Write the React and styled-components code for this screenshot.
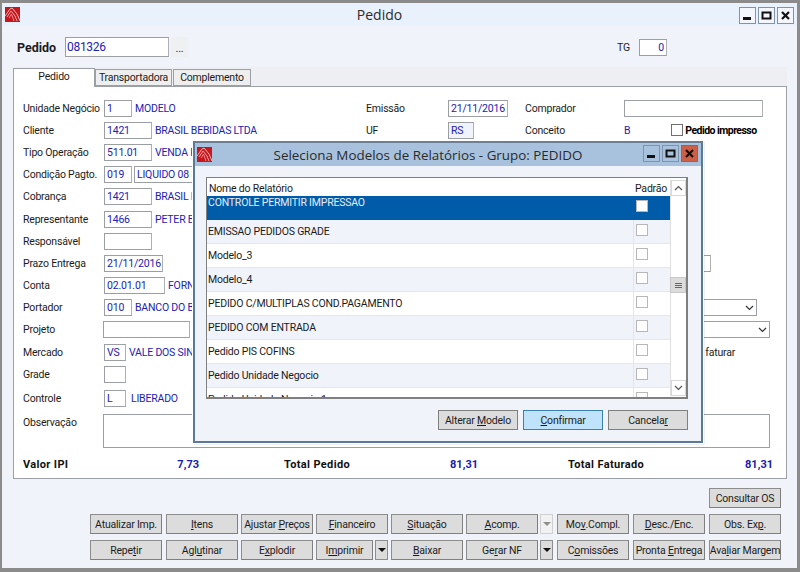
import React from "react";
import styled, { createGlobalStyle } from "styled-components";

const Global = createGlobalStyle`
  html, body { margin: 0; padding: 0; background: #fff; }
  body { font-family: Roboto, "Liberation Sans", Arial, sans-serif; font-size: 10.5px; letter-spacing: -0.2px; color: #1c1c1c; }
  * { box-sizing: border-box; }
  u { text-underline-offset: 1px; }
`;

const Desktop = styled.div`
  position: relative;
  width: 800px;
  height: 572px;
  overflow: hidden;
  display: flex;
  flex-direction: column;
  background: #f1f3fa;
  border: solid #8b8b8b;
  border-width: 3px 3px 4px 2px;
`;

const TitleBar = styled.div`
  position: relative;
  flex: none;
  height: 23px;
  padding-right: 40px;
  display: flex;
  align-items: center;
  justify-content: center;
  background: ${(p) => (p.$modal ? "#a8c2dd" : "#e9f1fd")};
  font-family: "Open Sans", sans-serif;
  font-size: ${(p) => (p.$modal ? 13.4 : 14)}px;
  letter-spacing: 0;
  color: #2b2b2b;
`;

const TitleIcon = styled.svg`
  position: absolute;
  left: ${(p) => p.$left}px;
  top: 4px;
`;

const WinButtons = styled.div`
  position: absolute;
  right: ${(p) => p.$right}px;
  top: ${(p) => p.$top}px;
  display: flex;
  gap: 2px;
`;

const WinButton = styled.div`
  width: 17px;
  height: 17px;
  display: flex;
  align-items: center;
  justify-content: center;
  border: 1px solid ${(p) => (p.$close ? "#b9573f" : "#7e94ad")};
  background: ${(p) => (p.$close ? "#cc5f48" : p.$modal ? "#a8c2dd" : "#f3f7fd")};
`;

const Content = styled.div`
  flex: 1;
  padding: 11px 10px 0 11px;
  display: flex;
  flex-direction: column;
`;

const HeaderRow = styled.div`
  display: flex;
  align-items: center;
  height: 20px;
  padding-left: 4px;
`;

const OrderLabel = styled.span`
  width: 48px;
  font-size: 12.5px;
  font-weight: 700;
  letter-spacing: 0;
`;

const Field = styled.div`
  flex: none;
  width: ${(p) => p.$w}px;
  height: ${(p) => p.$h || 17}px;
  margin-left: ${(p) => p.$ml || 0}px;
  padding: 0 2px;
  display: flex;
  align-items: center;
  justify-content: ${(p) => (p.$right ? "flex-end" : "flex-start")};
  background: ${(p) => (p.$ro ? "#f1f3fa" : "#fff")};
  border: 1px solid #9b9ea3;
  border-right-color: #aeb0b3;
  color: #2222b4;
  white-space: nowrap;
  overflow: hidden;
`;

const BigField = styled(Field)`
  font-size: 12px;
  letter-spacing: -0.3px;
  padding-left: 1px;
`;

const DotsButton = styled.div`
  width: 17px;
  height: 20px;
  margin-left: 2px;
  display: flex;
  align-items: flex-end;
  justify-content: center;
  padding-bottom: 3px;
  background: #eff0f2;
  font-size: 11px;
  line-height: 11px;
`;

const TgLabel = styled.span`
  margin-left: 429px;
  width: 22px;
`;

const TabStrip = styled.div`
  display: flex;
  align-items: flex-end;
  height: 19px;
  margin-top: 10px;
  background: #eeeff2;
`;

const Tab = styled.div`
  height: ${(p) => (p.$active ? 19 : 17)}px;
  width: ${(p) => p.$w}px;
  margin-right: ${(p) => p.$mr || 0}px;
  display: flex;
  align-items: center;
  justify-content: center;
  position: relative;
  top: ${(p) => (p.$active ? 1 : 0)}px;
  padding-bottom: ${(p) => (p.$active ? 4 : 0)}px;
  z-index: ${(p) => (p.$active ? 1 : 0)};
  background: ${(p) => (p.$active ? "#fff" : "#eeeeee")};
  border: 1px solid #9ba0a6;
  border-bottom: ${(p) => (p.$active ? "none" : "1px solid #9ba0a6")};
`;

const Panel = styled.div`
  height: 393px;
  background: #fff;
  border: 1px solid #9ba0a6;
  padding: 10px 9px 0;
  position: relative;
`;

const Row = styled.div`
  display: grid;
  grid-template-columns: 343px 82px 77px 99px 1fr;
  align-items: center;
  height: 22.2px;
  margin-top: ${(p) => p.$mt || 0}px;
`;

const Left = styled.div`
  display: flex;
  align-items: center;
  height: 17px;
  white-space: nowrap;
`;

const Label = styled.span`
  flex: none;
  width: 81px;
`;

const Value = styled.span`
  color: #2222b4;
  margin-left: ${(p) => p.$ml ?? 3}px;
  white-space: nowrap;
`;

const Wide = styled.div`
  grid-column: 2 / -1;
  display: flex;
  justify-content: flex-end;
  padding-right: ${(p) => p.$pr || 0}px;
  height: 17px;
  align-items: center;
`;

const SelectBox = styled.div`
  width: 120px;
  height: 17px;
  background: #fff;
  border: 1px solid #9b9ea3;
  display: flex;
  align-items: center;
  justify-content: flex-end;
  padding-right: 2px;
`;

const CheckLine = styled.div`
  display: flex;
  align-items: center;
  gap: 2px;
  margin-left: 41px;
  font-weight: 700;
  font-size: 10.5px;
  letter-spacing: -0.55px;
  color: #000;
`;

const Check = styled.span`
  flex: none;
  display: block;
  width: 12px;
  height: 12px;
  background: #fff;
  border: 1px solid ${(p) => (p.$dark ? "#707070" : "#b8b8b8")};
`;

const ObsRow = styled.div`
  display: flex;
  height: 34px;
  margin-top: 4px;
`;

const ObsLabel = styled.span`
  width: 81px;
  padding-top: 2px;
`;

const ObsBox = styled.div`
  width: 667px;
  margin-left: -1px;
  background: #fff;
  border: 1px solid #9b9ea3;
`;

const Totals = styled.div`
  display: flex;
  margin-top: 10px;
  font-weight: 700;
  font-size: 11px;
  white-space: nowrap;
`;

const TotalGroup = styled.div`
  display: flex;
  justify-content: space-between;
  width: ${(p) => p.$w}px;
  margin-left: ${(p) => p.$ml || 0}px;
`;

const TotalLabel = styled.span`
  color: #111;
  letter-spacing: 0.35px;
`;

const TotalValue = styled.span`
  color: #1a1ab0;
  letter-spacing: 0;
`;

const Actions = styled.div`
  display: flex;
  flex-direction: column;
  gap: 6px;
  margin-top: 9px;
`;

const ConsultRow = styled.div`
  display: flex;
  justify-content: flex-end;
  padding-right: 6px;
`;

const ButtonGrid = styled.div`
  display: grid;
  grid-template-columns: 76px 75px 75px 75px 75px 74px 17px 76px 76px 72px;
  margin-left: 77px;
`;

const Btn = styled.div`
  height: 20px;
  width: ${(p) => p.$w || 72}px;
  display: flex;
  align-items: center;
  justify-content: center;
  background: #dcdcdc;
  border: 1px solid #8d8d8d;
  border-right-color: #7f7f7f;
  border-bottom-color: #7f7f7f;
  white-space: pre;
`;

const Split = styled.div`
  display: flex;
  gap: 2px;
`;

const Arrow = styled.div`
  width: 13px;
  height: 20px;
  display: flex;
  align-items: center;
  justify-content: center;
  background: ${(p) => (p.$off ? "#f1f1f1" : "#dcdcdc")};
  border: 1px solid ${(p) => (p.$off ? "#d0d0d0" : "#8d8d8d")};

  &::after {
    content: "";
    border: 4px solid transparent;
    border-top-color: ${(p) => (p.$off ? "#8f8f8f" : "#111")};
    border-bottom-width: 0;
  }
`;

const Modal = styled.div`
  position: absolute;
  left: 191px;
  top: 138px;
  width: 510px;
  height: 302px;
  display: flex;
  flex-direction: column;
  background: #f1f3fa;
  border: 2px solid #5b7a98;
  border-top-color: #6d7f92;
  outline: 1px solid #fff;
  box-shadow: 1px 1px 1px rgba(0, 0, 0, 0.35);
`;

const ModalBody = styled.div`
  flex: 1;
  padding: 11px 13px 0 11px;
`;

const ListBox = styled.div`
  position: relative;
  height: 222px;
  background: #fff;
  border: 1px solid #7f7f7f;
  border-width: 1px 2px 2px 1px;
  overflow: hidden;
  padding: 2px 0 0;
`;

const ListHead = styled.div`
  display: grid;
  grid-template-columns: 1fr 37px 16px;
  height: 16px;
  align-items: center;
  background: #fff;
`;

const HeadCell = styled.span`
  padding-left: 2px;
`;

const ListRow = styled.div`
  display: grid;
  grid-template-columns: 1fr 37px;
  height: 24px;
  margin-right: 16px;
  align-items: center;
  background: ${(p) => (p.$sel ? "#005ca8" : p.$alt ? "#f1f3fa" : "#fff")};
  color: ${(p) => (p.$sel ? "#e4eefa" : "#1c1c1c")};
  border-bottom: 1px solid ${(p) => (p.$sel ? "#005ca8" : "#e6e6ea")};
`;

const RowName = styled.span`
  padding: 0 0 1px 1px;
  align-self: ${(p) => (p.$sel ? "start" : "center")};
  white-space: nowrap;
  overflow: hidden;
`;

const CheckCell = styled.span`
  height: 100%;
  display: flex;
  align-items: center;
  padding: 0 0 3px 2px;
  border-left: 1px solid ${(p) => (p.$sel ? "#005ca8" : "#e6e6ea")};
`;

const ScrollBar = styled.div`
  position: absolute;
  right: 0;
  top: 2px;
  bottom: 1px;
  width: 16px;
  background: #fff;
  border-left: 1px solid #e0e0e0;
  display: flex;
  flex-direction: column;
  justify-content: space-between;
`;

const ScrollBtn = styled.div`
  height: 16px;
  display: flex;
  align-items: center;
  justify-content: center;
  border: 1px solid #d8d8d8;
  background: #fff;
`;

const Thumb = styled.div`
  position: absolute;
  left: -1px;
  right: 0;
  top: 97px;
  height: 16px;
  display: flex;
  flex-direction: column;
  gap: 1px;
  align-items: center;
  justify-content: center;
  background: #dcdcdc;
  border: 1px solid #c8c8c8;

  i {
    display: block;
    width: 7px;
    height: 1px;
    background: #666;
  }
`;

const ModalActions = styled.div`
  display: flex;
  justify-content: flex-end;
  gap: 5px;
  margin-top: 11px;
`;

const ModalBtn = styled.div`
  width: ${(p) => p.$w}px;
  height: 20px;
  display: flex;
  align-items: center;
  justify-content: center;
  white-space: pre;
  background: ${(p) => (p.$primary ? "#bee3fb" : "#dcdcdc")};
  border: 1px solid ${(p) => (p.$primary ? "#3c7fb1" : "#7f7f7f")};
`;

const Logo = ({ left }) => (
  <TitleIcon $left={left} width="15" height="15" viewBox="0 0 15 15">
    <rect width="15" height="15" fill="#c8161d" />
    <path d="M0 9 L5 2 L7 1 L12 7 L15 14" fill="none" stroke="#f2b6b6" strokeWidth="1" />
    <path d="M2 10 L6 4 L10 9 L12 14" fill="none" stroke="#f0a5a5" strokeWidth="1" />
    <path d="M4 11 L6.5 7 L9 14" fill="none" stroke="#e98c8c" strokeWidth="1" />
  </TitleIcon>
);

const MinIcon = ({ c = "#111" }) => (
  <svg width="11" height="11" viewBox="0 0 11 11">
    <rect x="1" y="7" width="8" height="3" fill={c} />
  </svg>
);

const MaxIcon = ({ c = "#111" }) => (
  <svg width="11" height="11" viewBox="0 0 11 11">
    <rect x="1.5" y="2.5" width="8" height="6" fill="none" stroke={c} strokeWidth="2" />
  </svg>
);

const CloseIcon = ({ c = "#111" }) => (
  <svg width="11" height="11" viewBox="0 0 11 11">
    <path d="M2 2 L9 9 M9 2 L2 9" stroke={c} strokeWidth="2.2" />
  </svg>
);

const Chevron = ({ up, c = "#555" }) => (
  <svg width="9" height="6" viewBox="0 0 9 6">
    <path d={up ? "M1 5 L4.5 1.5 L8 5" : "M1 1 L4.5 4.5 L8 1"} fill="none" stroke={c} strokeWidth="1.2" />
  </svg>
);

const REPORTS = [
  "CONTROLE PERMITIR IMPRESSAO",
  "EMISSAO PEDIDOS GRADE",
  "Modelo_3",
  "Modelo_4",
  "PEDIDO C/MULTIPLAS COND.PAGAMENTO",
  "PEDIDO COM ENTRADA",
  "Pedido PIS COFINS",
  "Pedido Unidade Negocio",
  "Pedido Unidade Negocio 1",
];

export default function App() {
  return (
    <Desktop>
      <Global />
      <TitleBar>
        <Logo left={3} />
        Pedido
        <WinButtons $right={3} $top={4}>
          <WinButton><MinIcon /></WinButton>
          <WinButton><MaxIcon /></WinButton>
          <WinButton><CloseIcon /></WinButton>
        </WinButtons>
      </TitleBar>

      <Content>
        <HeaderRow>
          <OrderLabel>Pedido</OrderLabel>
          <BigField $w={104} $h={20}>081326</BigField>
          <DotsButton>...</DotsButton>
          <TgLabel>TG</TgLabel>
          <Field $w={28} $right>0</Field>
        </HeaderRow>

        <TabStrip>
          <Tab $active $w={82}>Pedido</Tab>
          <Tab $w={77} $mr={1}>Transportadora</Tab>
          <Tab $w={78}>Complemento</Tab>
        </TabStrip>

        <Panel>
          <Row>
            <Left><Label>Unidade Negócio</Label><Field $w={28}>1</Field><Value>MODELO</Value></Left>
            <span>Emissão</span>
            <Field $w={60}>21/11/2016</Field>
            <span>Comprador</span>
            <Field $w={139} />
          </Row>
          <Row>
            <Left><Label>Cliente</Label><Field $w={48}>1421</Field><Value>BRASIL BEBIDAS LTDA</Value></Left>
            <span>UF</span>
            <Field $w={26} $ro>RS</Field>
            <span>Conceito</span>
            <Left>
              <Value $ml={0}>B</Value>
              <CheckLine><Check $dark />Pedido impresso</CheckLine>
            </Left>
          </Row>
          <Row>
            <Left><Label>Tipo Operação</Label><Field $w={48}>511.01</Field><Value>VENDA PADRAO</Value></Left>
          </Row>
          <Row>
            <Left><Label>Condição Pagto.</Label><Field $w={28}>019</Field><Field $w={80} $ml={2}>LIQUIDO 08 DIAS</Field></Left>
          </Row>
          <Row>
            <Left><Label>Cobrança</Label><Field $w={48}>1421</Field><Value>BRASIL BEBIDAS</Value></Left>
          </Row>
          <Row>
            <Left><Label>Representante</Label><Field $w={48}>1466</Field><Value>PETER BAUER</Value></Left>
          </Row>
          <Row>
            <Left><Label>Responsável</Label><Field $w={48} /></Left>
          </Row>
          <Row>
            <Left><Label>Prazo Entrega</Label><Field $w={59}>21/11/2016</Field></Left>
            <Wide $pr={66}><Field $w={60} /></Wide>
          </Row>
          <Row>
            <Left><Label>Conta</Label><Field $w={61}>02.01.01</Field><Value>FORNECEDOR</Value></Left>
          </Row>
          <Row>
            <Left><Label>Portador</Label><Field $w={28}>010</Field><Value>BANCO DO BRASIL</Value></Left>
            <Wide $pr={20}><SelectBox><Chevron c="#333" /></SelectBox></Wide>
          </Row>
          <Row>
            <Left><Label>Projeto</Label><Field $w={87} $ml={-1} /></Left>
            <Wide $pr={7}><SelectBox><Chevron c="#333" /></SelectBox></Wide>
          </Row>
          <Row>
            <Left><Label>Mercado</Label><Field $w={22}>VS</Field><Value>VALE DOS SINOS</Value></Left>
            <Wide $pr={42}><span>faturar</span></Wide>
          </Row>
          <Row>
            <Left><Label>Grade</Label><Field $w={22} /></Left>
          </Row>
          <Row $mt={2}>
            <Left><Label>Controle</Label><Field $w={22}>L</Field><Value $ml={5}>LIBERADO</Value></Left>
          </Row>
          <ObsRow>
            <ObsLabel>Observação</ObsLabel>
            <ObsBox />
          </ObsRow>
          <Totals>
            <TotalGroup $w={176}>
              <TotalLabel>Valor IPI</TotalLabel>
              <TotalValue>7,73</TotalValue>
            </TotalGroup>
            <TotalGroup $w={194} $ml={85}>
              <TotalLabel>Total Pedido</TotalLabel>
              <TotalValue>81,31</TotalValue>
            </TotalGroup>
            <TotalGroup $w={205} $ml={90}>
              <TotalLabel>Total Faturado</TotalLabel>
              <TotalValue>81,31</TotalValue>
            </TotalGroup>
          </Totals>
        </Panel>

        <Actions>
          <ConsultRow><Btn>Consultar OS</Btn></ConsultRow>
          <ButtonGrid>
            <Btn>Atualizar Imp.</Btn>
            <Btn><u>I</u>tens</Btn>
            <Btn>Ajustar <u>P</u>reços</Btn>
            <Btn><u>F</u>inanceiro</Btn>
            <Btn><u>S</u>ituação</Btn>
            <Btn><u>A</u>comp.</Btn>
            <Arrow $off />
            <Btn>Mo<u>v</u>.Compl.</Btn>
            <Btn><u>D</u>esc./Enc.</Btn>
            <Btn>Obs. Ex<u>p</u>.</Btn>
          </ButtonGrid>
          <ButtonGrid>
            <Btn>Repe<u>t</u>ir</Btn>
            <Btn>Agl<u>u</u>tinar</Btn>
            <Btn>E<u>x</u>plodir</Btn>
            <Split><Btn $w={57}>I<u>m</u>primir</Btn><Arrow /></Split>
            <Btn><u>B</u>aixar</Btn>
            <Btn>Ge<u>r</u>ar NF</Btn>
            <Arrow />
            <Btn>C<u>o</u>missões</Btn>
            <Btn>Pronta <u>E</u>ntrega</Btn>
            <Btn>Ava<u>l</u>iar Margem</Btn>
          </ButtonGrid>
        </Actions>
      </Content>

      <Modal>
        <TitleBar $modal>
          <Logo left={2} />
          Seleciona Modelos de Relatórios - Grupo: PEDIDO
          <WinButtons $right={3} $top={2}>
            <WinButton $modal><MinIcon /></WinButton>
            <WinButton $modal><MaxIcon /></WinButton>
            <WinButton $close><CloseIcon /></WinButton>
          </WinButtons>
        </TitleBar>
        <ModalBody>
          <ListBox>
            <ListHead>
              <HeadCell>Nome do Relatório</HeadCell>
              <HeadCell>Padrão</HeadCell>
            </ListHead>
            {REPORTS.map((name, i) => (
              <ListRow key={name} $sel={i === 0} $alt={i % 2 === 1}>
                <RowName $sel={i === 0}>{name}</RowName>
                <CheckCell $sel={i === 0}><Check /></CheckCell>
              </ListRow>
            ))}
            <ScrollBar>
              <ScrollBtn><Chevron up /></ScrollBtn>
              <Thumb><i /><i /><i /></Thumb>
              <ScrollBtn><Chevron /></ScrollBtn>
            </ScrollBar>
          </ListBox>
          <ModalActions>
            <ModalBtn $w={80}>Alterar <u>M</u>odelo</ModalBtn>
            <ModalBtn $w={80} $primary><u>C</u>onfirmar</ModalBtn>
            <ModalBtn $w={80}>Cancela<u>r</u></ModalBtn>
          </ModalActions>
        </ModalBody>
      </Modal>
    </Desktop>
  );
}
